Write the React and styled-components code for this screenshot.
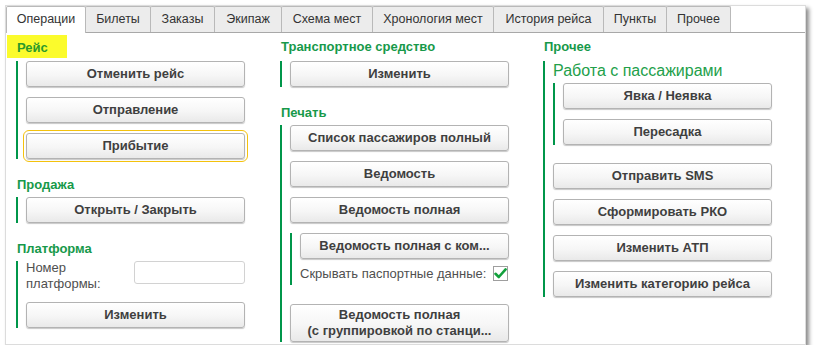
import React from "react";
import styled, { createGlobalStyle } from "styled-components";

const GREEN_TEXT = "#17994a";
const GREEN_LINE = "#00964a";

const GlobalStyle = createGlobalStyle`
  html, body {
    margin: 0;
    padding: 0;
    background: #fff;
    font-family: "Liberation Sans", Arial, sans-serif;
  }
`;

const Window = styled.div`
  margin: 5px 0 0 5px;
  width: 801px;
  height: 340px;
  box-sizing: border-box;
  border: 1px solid #dcdcdc;
  background: #fff;
  box-shadow: 3px 3px 4px rgba(0, 0, 0, 0.45);
  overflow: hidden;
`;

const TabBar = styled.div`
  display: flex;
  height: 26px;
  border-bottom: 1px solid #a8a8a8;
`;

const Tab = styled.div`
  width: ${(p) => p.$width}px;
  flex: none;
  height: ${(p) => (p.$active ? "27px" : "26px")};
  box-sizing: border-box;
  margin-right: -1px;
  border: 1px solid #b9b9b9;
  border-bottom: none;
  border-radius: 2px 2px 0 0;
  background: ${(p) => (p.$active ? "#fff" : "#ececec")};
  color: #333;
  font-size: 12.5px;
  line-height: 25px;
  text-align: center;
  white-space: nowrap;
  position: relative;
  z-index: ${(p) => (p.$active ? 1 : 0)};
`;

const Content = styled.div`
  display: flex;
  padding: 2px 0 0 10px;
`;

const Column = styled.div`
  display: flex;
  flex-direction: column;
  align-items: flex-start;
  width: ${(p) => p.$width}px;
  flex: none;
`;

const Label = styled.div`
  height: 24px;
  line-height: 24px;
  font-size: 13px;
  font-weight: bold;
  color: ${GREEN_TEXT};
  padding-left: 1px;
  margin-top: ${(p) => (p.$first ? 0 : 14)}px;
  margin-bottom: ${(p) => (p.$first ? 2 : 0)}px;
`;

const Highlight = styled(Label)`
  background: #fbfb2c;
  color: #2a9a2a;
  margin-left: -9px;
  padding: 0 19px 0 10px;
  height: 23px;
  line-height: 25px;
  margin-bottom: 3px;
`;

const Group = styled.div`
  display: flex;
  flex-direction: column;
  gap: 10px;
  width: 219px;
  border-left: 2px solid ${GREEN_LINE};
  padding-left: 8px;
`;

const Nested = styled(Group)`
  width: auto;
  gap: ${(p) => p.$gap}px;
  margin-bottom: ${(p) => p.$after}px;
`;

const SubGroup = styled.div`
  display: flex;
  flex-direction: column;
  margin-bottom: 8px;
`;

const SubLabel = styled.div`
  height: 22px;
  line-height: 20px;
  font-size: 16px;
  color: #22a04a;
`;

const Button = styled.div`
  height: ${(p) => (p.$tall ? 38 : 26)}px;
  box-sizing: border-box;
  display: flex;
  align-items: center;
  justify-content: center;
  text-align: center;
  border: 1px solid #b3b3b3;
  border-radius: 3px;
  background: linear-gradient(#ffffff, #f6f6f6 55%, #e9e9e9);
  box-shadow: 0 1px 1px rgba(0, 0, 0, 0.22);
  color: #3f3f3f;
  font-size: 13px;
  font-weight: bold;
  line-height: 16px;
  white-space: nowrap;
  outline: ${(p) => (p.$focused ? "1px solid #f4c20d" : "none")};
  outline-offset: 2px;
`;

const FieldRow = styled.div`
  display: flex;
  align-items: flex-start;
  height: 31px;
`;

const FieldLabel = styled.div`
  width: 90px;
  font-size: 13px;
  line-height: 16px;
  color: #4f4f4f;
  margin-top: -1px;
`;

const Input = styled.div`
  margin-left: auto;
  width: 111px;
  height: 23px;
  box-sizing: border-box;
  border: 1px solid #d2d2d2;
  border-radius: 3px;
  background: #fff;
`;

const CheckRow = styled.label`
  display: flex;
  align-items: center;
  gap: 7px;
  height: 23px;
  font-size: 13px;
  color: #4f4f4f;
  white-space: nowrap;
`;

const CheckBox = styled.span`
  flex: none;
  width: 15px;
  height: 15px;
  box-sizing: border-box;
  border: 1px solid #9e9e9e;
  background: #fff;
  display: flex;
  align-items: center;
  justify-content: center;
`;

function Check() {
  return (
    <CheckBox>
      <svg width="13" height="13" viewBox="0 0 13 13">
        <path
          d="M1.5 6.8 L4.8 10 L11.6 2.4"
          fill="none"
          stroke="#12a03c"
          strokeWidth="2.6"
          strokeLinecap="round"
          strokeLinejoin="round"
        />
      </svg>
    </CheckBox>
  );
}

const tabs = [
  ["Операции", 80],
  ["Билеты", 66],
  ["Заказы", 65],
  ["Экипаж", 68],
  ["Схема мест", 92],
  ["Хронология мест", 122],
  ["История рейса", 111],
  ["Пункты", 64],
  ["Прочее", 65],
];

export default function App() {
  return (
    <>
      <GlobalStyle />
      <Window>
        <TabBar>
          {tabs.map(([t, w], i) => (
            <Tab key={t} $width={w} $active={i === 0}>
              {t}
            </Tab>
          ))}
        </TabBar>
        <Content>
          <Column $width={264}>
            <Highlight $first>Рейс</Highlight>
            <Group>
              <Button>Отменить рейс</Button>
              <Button>Отправление</Button>
              <Button $focused>Прибытие</Button>
            </Group>
            <Label>Продажа</Label>
            <Group>
              <Button>Открыть / Закрыть</Button>
            </Group>
            <Label>Платформа</Label>
            <Group>
              <FieldRow>
                <FieldLabel>Номер платформы:</FieldLabel>
                <Input />
              </FieldRow>
              <Button>Изменить</Button>
            </Group>
          </Column>

          <Column $width={263}>
            <Label $first>Транспортное средство</Label>
            <Group>
              <Button>Изменить</Button>
            </Group>
            <Label>Печать</Label>
            <Group>
              <Button>Список пассажиров полный</Button>
              <Button>Ведомость</Button>
              <Button>Ведомость полная</Button>
              <Nested $gap={3} $after={9}>
                <Button>Ведомость полная с ком...</Button>
                <CheckRow>
                  Скрывать паспортные данные:
                  <Check />
                </CheckRow>
              </Nested>
              <Button $tall>
                Ведомость полная
                <br />
                (с группировкой по станци...
              </Button>
            </Group>
          </Column>

          <Column $width={250}>
            <Label $first>Прочее</Label>
            <Group>
              <SubGroup>
                <SubLabel>Работа с пассажирами</SubLabel>
                <Nested $gap={10} $after={0}>
                  <Button>Явка / Неявка</Button>
                  <Button>Пересадка</Button>
                </Nested>
              </SubGroup>
              <Button>Отправить SMS</Button>
              <Button>Сформировать РКО</Button>
              <Button>Изменить АТП</Button>
              <Button>Изменить категорию рейса</Button>
            </Group>
          </Column>
        </Content>
      </Window>
    </>
  );
}
